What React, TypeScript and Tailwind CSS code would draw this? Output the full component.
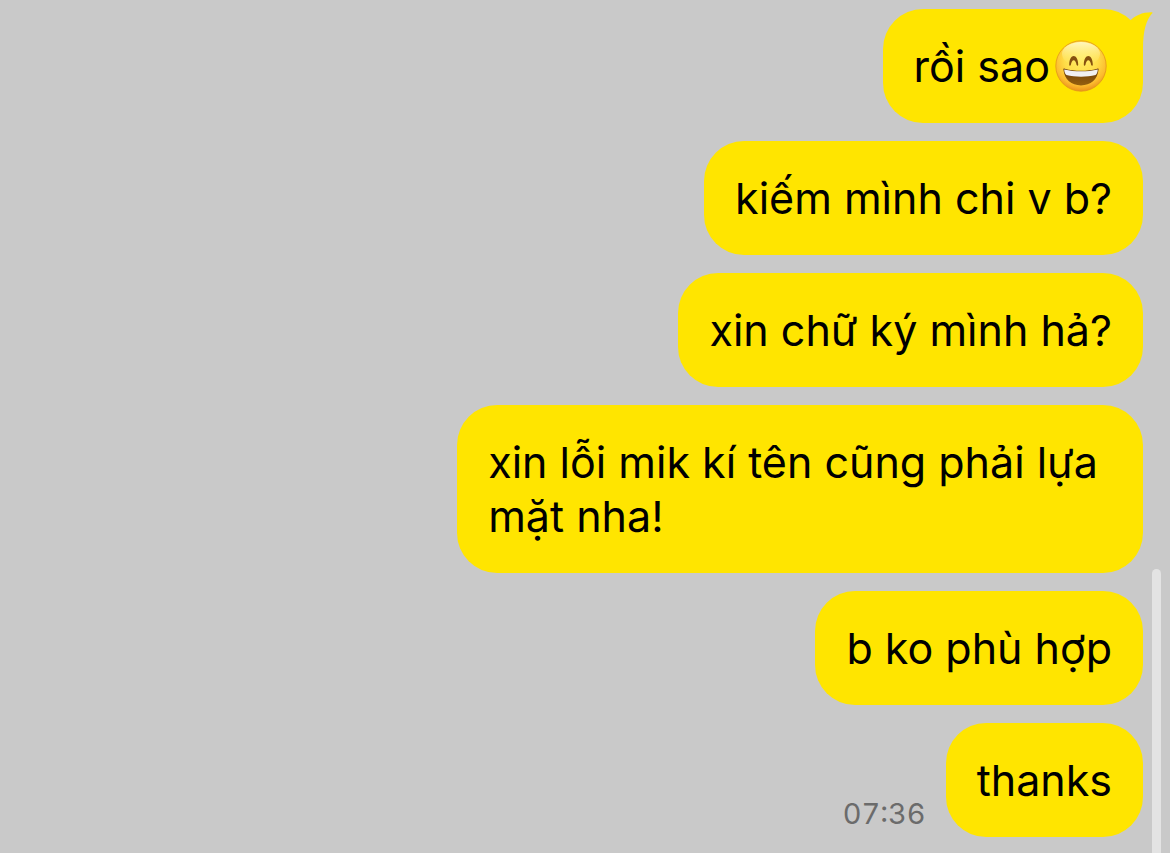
type Message = {
  id: number;
  text: string;
  emoji?: boolean;
  tail?: boolean;
  time?: string;
};

const messages: Message[] = [
  { id: 1, text: "rồi sao", emoji: true, tail: true },
  { id: 2, text: "kiếm mình chi v b?" },
  { id: 3, text: "xin chữ ký mình hả?" },
  { id: 4, text: "xin lỗi mik kí tên cũng phải lựa mặt nha!" },
  { id: 5, text: "b ko phù hợp" },
  { id: 6, text: "thanks", time: "07:36" },
];

const GrinEmoji = () => (
  <svg
    viewBox="0 0 52 52"
    className="mx-[5px] inline-block size-[52px] align-[-10px]"
    role="img"
    aria-label="grinning face with smiling eyes"
  >
    <defs>
      <radialGradient id="face" cx="50%" cy="36%" r="66%">
        <stop offset="0" stopColor="#ffec62" />
        <stop offset="0.5" stopColor="#ffdd48" />
        <stop offset="0.8" stopColor="#fcbb2e" />
        <stop offset="1" stopColor="#e8891a" />
      </radialGradient>
      <linearGradient id="shine" x1="0" y1="0" x2="0" y2="1">
        <stop offset="0" stopColor="#fffbd6" stopOpacity="0.85" />
        <stop offset="1" stopColor="#fff27c" stopOpacity="0" />
      </linearGradient>
      <linearGradient id="mouth" x1="0" y1="0" x2="0" y2="1">
        <stop offset="0" stopColor="#6d3c08" />
        <stop offset="1" stopColor="#95600f" />
      </linearGradient>
    </defs>
    <circle cx="26" cy="26" r="25.2" fill="url(#face)" stroke="#e3961c" strokeWidth="0.8" />
    <ellipse cx="26" cy="14" rx="19" ry="12" fill="url(#shine)" />
    {/* Eyes */}
    <path
      d="M14.2 24.8C14.2 13.2 23.2 13.2 23.2 24.8C23.2 25.9 22 25.9 21.6 24.9C20.6 18.6 16.8 18.6 15.8 24.9C15.4 25.9 14.2 25.9 14.2 24.8ZM28.8 24.8C28.8 13.2 37.8 13.2 37.8 24.8C37.8 25.9 36.6 25.9 36.2 24.9C35.2 18.6 31.4 18.6 30.4 24.9C30 25.9 28.8 25.9 28.8 24.8Z"
      fill="#85500f"
    />
    {/* Mouth and teeth */}
    <path
      d="M8.4 29.6C8.2 28.7 8.9 28.4 9.8 28.7C20 31.4 32 31.4 42.2 28.7C43.1 28.4 43.8 28.7 43.6 29.6C42.6 39.6 35.6 45.4 26 45.4C16.4 45.4 9.4 39.6 8.4 29.6Z"
      fill="url(#mouth)"
    />
    <path
      d="M9.2 29.4C20 32 32 32 42.8 29.4C42.6 32 42 33.6 40.6 35C31.5 37.2 20.5 37.2 11.4 35C10 33.6 9.4 32 9.2 29.4Z"
      fill="#f1f0f2"
    />
  </svg>
);

const BubbleTail = () => (
  <svg
    viewBox="0 0 24 40"
    className="absolute -right-[10px] top-0 h-10 w-6"
    fill="#ffe500"
    aria-hidden="true"
  >
    <path d="M0 12.5C6 6.5 13 3.2 22.5 3.2C23.6 3.2 23.8 3.9 23 4.6C17.5 11 14 21 14 40L0 40Z" />
  </svg>
);

const MessageRow = ({ message }: { message: Message }) => (
  <li className="flex items-end justify-end gap-5">
    {message.time && (
      <time className="mb-1 text-[29px] leading-[38px] tabular-nums text-[#6b6b6b]">{message.time}</time>
    )}
    <div className="relative max-w-3/5 rounded-[40px] bg-[#ffe500] px-[31px] py-[30px]">
      <p className="text-[43px] leading-[54px] text-black">
        {message.text}
        {message.emoji && <GrinEmoji />}
      </p>
      {message.tail && <BubbleTail />}
    </div>
  </li>
);

const App = () => {
  return (
    <main className="relative min-h-screen bg-[#c9c9c9] pb-4 pr-[27px] pt-[9px] font-['Inter','Noto_Sans',sans-serif]">
      <ul className="flex flex-col gap-[18px]">
        {messages.map((message) => (
          <MessageRow key={message.id} message={message} />
        ))}
      </ul>

      {/* Scroll position indicator */}
      <div className="absolute bottom-0 right-[9px] top-2/3 w-[9px] rounded-t-full bg-[#e3e3e3]" />
    </main>
  );
};

export default App;
